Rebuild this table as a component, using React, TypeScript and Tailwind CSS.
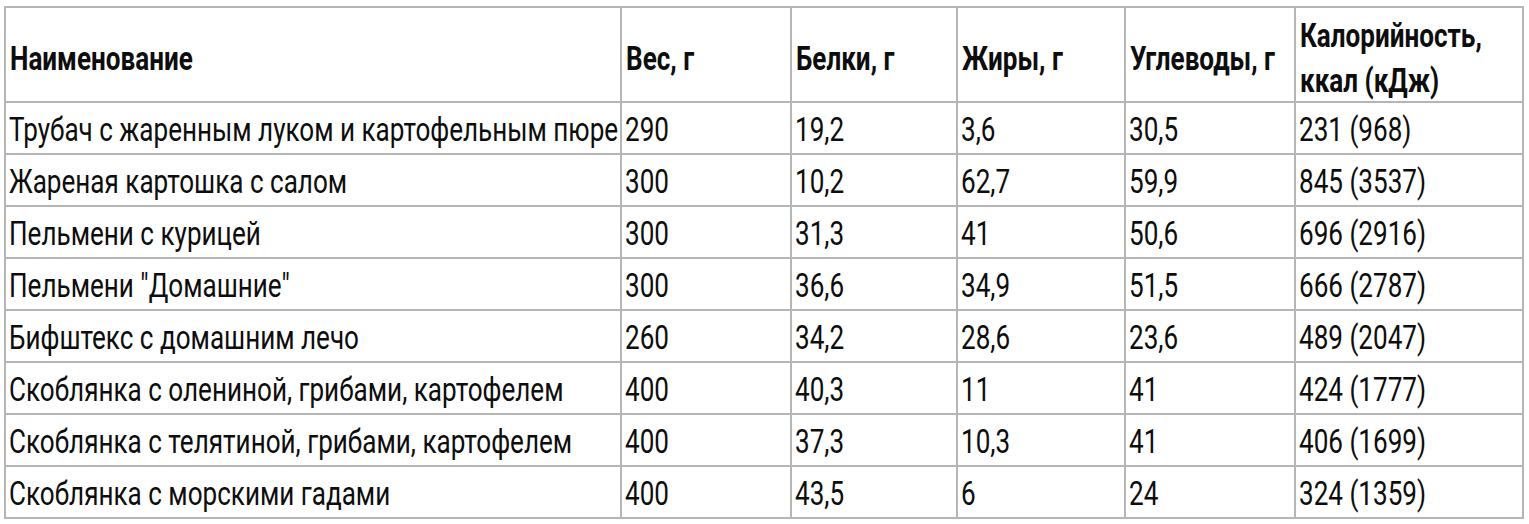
import React from "react";

const rows: string[][] = [
  ["Трубач с жаренным луком и картофельным пюре", "290", "19,2", "3,6", "30,5", "231 (968)"],
  ["Жареная картошка с салом", "300", "10,2", "62,7", "59,9", "845 (3537)"],
  ["Пельмени с курицей", "300", "31,3", "41", "50,6", "696 (2916)"],
  ["Пельмени \"Домашние\"", "300", "36,6", "34,9", "51,5", "666 (2787)"],
  ["Бифштекс с домашним лечо", "260", "34,2", "28,6", "23,6", "489 (2047)"],
  ["Скоблянка с олениной, грибами, картофелем", "400", "40,3", "11", "41", "424 (1777)"],
  ["Скоблянка с телятиной, грибами, картофелем", "400", "37,3", "10,3", "41", "406 (1699)"],
  ["Скоблянка с морскими гадами", "400", "43,5", "6", "24", "324 (1359)"],
];

const headers = ["Наименование", "Вес, г", "Белки, г", "Жиры, г", "Углеводы, г"];

function Narrow({ children }: { children: React.ReactNode }) {
  return <span className="inline-block origin-left scale-x-[0.79] whitespace-nowrap">{children}</span>;
}

export default function App() {
  return (
    <div className="w-[1529px] h-[524px] bg-white pl-[4px] pt-[6px]">
      <div
        className="grid w-max grid-cols-[616px_170px_166px_168px_170px_228px] grid-rows-[95px_repeat(8,52px)] border-l-2 border-t-2 border-[#b5b5b5] text-[#0d0d0d] text-[33px] leading-none"
        style={{ fontFamily: 'Roboto, "Liberation Sans", sans-serif' }}
      >
        {headers.map((h) => (
          <div
            key={h}
            className="flex items-center border-r-2 border-b-2 border-[#b5b5b5] pl-[4px] pt-[8px] font-bold"
          >
            <Narrow>{h}</Narrow>
          </div>
        ))}
        <div className="flex flex-col justify-center border-r-2 border-b-2 border-[#b5b5b5] pl-[4px] pt-[6px] font-bold leading-[45px]">
          <Narrow>Калорийность,</Narrow>
          <Narrow>ккал (кДж)</Narrow>
        </div>
        {rows.map((r, i) =>
          r.map((c, j) => (
            <div
              key={`${i}-${j}`}
              className="flex items-center border-r-2 border-b-2 border-[#b5b5b5] pl-[3px] pt-[3px]"
            >
              <Narrow>{c}</Narrow>
            </div>
          ))
        )}
      </div>
    </div>
  );
}
